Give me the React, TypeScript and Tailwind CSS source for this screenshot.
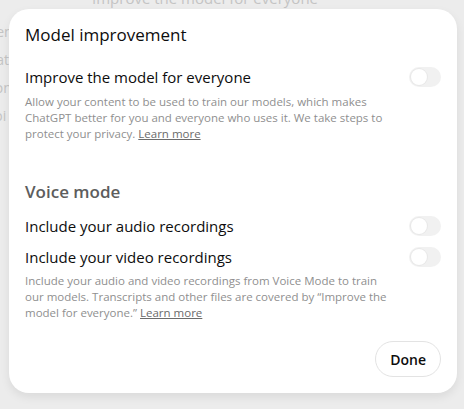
import React from 'react';

const Toggle = () => (
  <div className="w-8 h-5 rounded-full bg-[#ececec] p-[2px] flex items-center opacity-70">
    <div className="w-4 h-4 rounded-full bg-white shadow-[0_0_0_1px_rgba(0,0,0,0.06)]" />
  </div>
);

export default function App() {
  return (
    <div className="relative w-[464px] h-[409px] overflow-hidden bg-[#ececec] font-['Open_Sans',sans-serif]">
      {/* page behind the overlay */}
      <div className="absolute inset-0 text-[#c4c4c4]">
        <div className="absolute left-[92px] top-[-13px] text-[15px]">Improve the model for everyone</div>
        <div className="absolute left-[-14px] top-[18px] text-[14px] leading-[28px]">
          <div>Gen</div>
          <div>Dat</div>
          <div>Con</div>
          <div>Voi</div>
        </div>
      </div>

      <div className="absolute left-[9px] top-[9px] w-[448px] h-[384px] bg-white rounded-[20px] shadow-[0_4px_10px_rgba(0,0,0,0.08)] px-4 pt-3 pb-4 flex flex-col text-[#0d0d0d]">
        <h2 className="text-[17px] leading-[28px]">Model improvement</h2>

        <div className="mt-[14px] h-7 flex items-center justify-between">
          <span className="text-[15px]">Improve the model for everyone</span>
          <Toggle />
        </div>
        <p className="mt-[3px] pr-[44px] text-[11.5px] leading-4 text-[#8f8f8f]">
          Allow your content to be used to train our models, which makes ChatGPT better for you and everyone who uses it. We take steps to protect your privacy.{' '}
          <span className="underline text-[#6b6b6b]">Learn more</span>
        </p>

        <h3 className="mt-[38px] text-[17px] leading-6 font-semibold text-[#5d5d5d]">Voice mode</h3>

        <div className="mt-2 h-7 flex items-center justify-between">
          <span className="text-[15px]">Include your audio recordings</span>
          <Toggle />
        </div>
        <div className="mt-[3px] h-7 flex items-center justify-between">
          <span className="text-[15px]">Include your video recordings</span>
          <Toggle />
        </div>
        <p className="mt-[2px] pr-[44px] text-[11.5px] leading-4 text-[#8f8f8f]">
          Include your audio and video recordings from Voice Mode to train our models. Transcripts and other files are covered by “Improve the model for everyone.”{' '}
          <span className="underline text-[#6b6b6b]">Learn more</span>
        </p>

        <div className="mt-auto flex justify-end">
          <button className="h-9 px-[14px] rounded-full border border-[#e3e3e3] text-[14px] font-semibold text-[#0d0d0d]">
            Done
          </button>
        </div>
      </div>
    </div>
  );
}
